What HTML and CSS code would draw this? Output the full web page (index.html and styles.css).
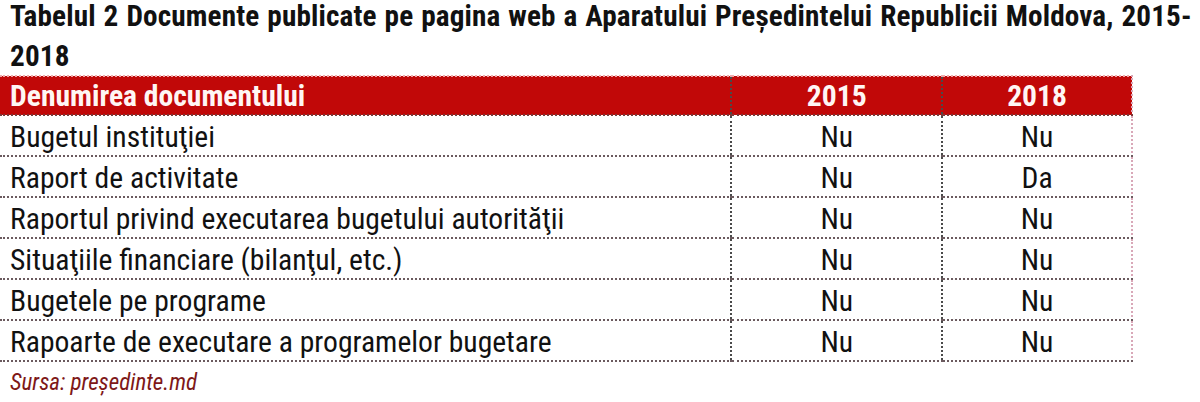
FILE: index.html
```html
<!DOCTYPE html>
<html lang="ro">
<head>
<meta charset="utf-8">
<title>Tabelul 2</title>
<link rel="stylesheet" href="styles.css">
</head>
<body>
<div class="page">
  <h1 class="title">Tabelul 2 Documente publicate pe pagina web a Aparatului Președintelui Republicii Moldova, 2015-<wbr>2018</h1>
  <table class="docs">
    <colgroup>
      <col class="c-name">
      <col class="c-year">
      <col class="c-year2">
    </colgroup>
    <thead>
      <tr>
        <th class="name">Denumirea documentului</th>
        <th class="val">2015</th>
        <th class="val last">2018</th>
      </tr>
    </thead>
    <tbody>
      <tr><td class="name">Bugetul instituţiei</td><td class="val">Nu</td><td class="val last">Nu</td></tr>
      <tr><td class="name">Raport de activitate</td><td class="val">Nu</td><td class="val last">Da</td></tr>
      <tr><td class="name">Raportul privind executarea bugetului autorităţii</td><td class="val">Nu</td><td class="val last">Nu</td></tr>
      <tr><td class="name">Situaţiile financiare (bilanţul, etc.)</td><td class="val">Nu</td><td class="val last">Nu</td></tr>
      <tr><td class="name">Bugetele pe programe</td><td class="val">Nu</td><td class="val last">Nu</td></tr>
      <tr><td class="name">Rapoarte de executare a programelor bugetare</td><td class="val">Nu</td><td class="val last">Nu</td></tr>
    </tbody>
  </table>
  <p class="source">Sursa: președinte.md</p>
</div>
</body>
</html>
```
FILE: styles.css
```css
html, body {
  margin: 0;
  padding: 0;
  background: #ffffff;
}
body {
  font-family: "Roboto Condensed", "Liberation Sans Narrow", "DejaVu Sans Condensed", Roboto, sans-serif;
  font-stretch: condensed;
  color: #111111;
}
.page {
  width: 1200px;
}
.title {
  margin: -4px 0 0 0;
  padding: 0 0 0 10px;
  font-size: 29.2px;
  line-height: 40px;
  font-weight: 700;
  letter-spacing: 0.15px;
  word-spacing: 1px;
  color: #111111;
}
.docs {
  width: 1133px;
  border-collapse: collapse;
  margin-top: -1px;
  font-size: 29.6px;
}
.c-name { width: 732px; }
.c-year { width: 211px; }
.c-year2 { width: 190px; }
.docs th {
  background: #c10808;
  color: #fff6f4;
  font-weight: 700;
  height: 37px;
  padding: 0 10px;
  border-top: 2px dotted #eeaaaa;
  border-bottom: 2px dotted #7a3a3a;
}
.docs td {
  height: 37px;
  padding: 2px 10px 0;
  border-bottom: 2px dotted #6b5a5e;
}
.docs .name {
  text-align: left;
}
.docs .val {
  text-align: center;
  border-left: 2px dotted #4a4a4a;
}
.docs .last {
  border-right: 2px dotted #d9a8b8;
}
.source {
  margin: 7px 0 0 10px;
  font-size: 23px;
  font-style: italic;
  color: #7e1818;
}
```
